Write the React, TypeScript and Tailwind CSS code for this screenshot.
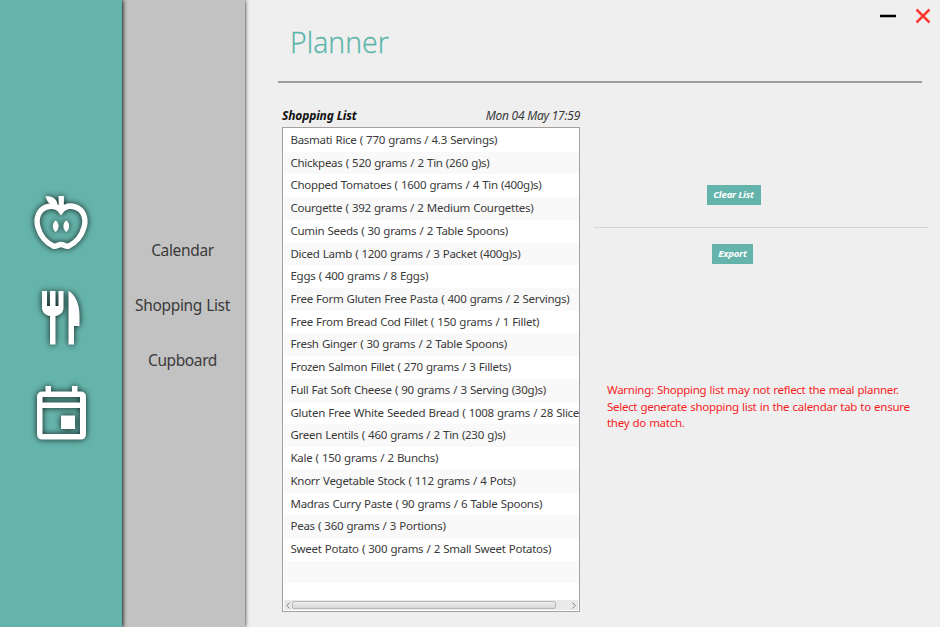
const items = [
  'Basmati Rice ( 770 grams / 4.3 Servings)',
  'Chickpeas ( 520 grams / 2 Tin (260 g)s)',
  'Chopped Tomatoes ( 1600 grams / 4 Tin (400g)s)',
  'Courgette ( 392 grams / 2 Medium Courgettes)',
  'Cumin Seeds ( 30 grams / 2 Table Spoons)',
  'Diced Lamb ( 1200 grams / 3 Packet (400g)s)',
  'Eggs ( 400 grams / 8 Eggs)',
  'Free Form Gluten Free Pasta ( 400 grams / 2 Servings)',
  'Free From Bread Cod Fillet ( 150 grams / 1 Fillet)',
  'Fresh Ginger ( 30 grams / 2 Table Spoons)',
  'Frozen Salmon Fillet ( 270 grams / 3 Fillets)',
  'Full Fat Soft Cheese ( 90 grams / 3 Serving (30g)s)',
  'Gluten Free White Seeded Bread ( 1008 grams / 28 Slice',
  'Green Lentils ( 460 grams / 2 Tin (230 g)s)',
  'Kale ( 150 grams / 2 Bunchs)',
  'Knorr Vegetable Stock ( 112 grams / 4 Pots)',
  'Madras Curry Paste ( 90 grams / 6 Table Spoons)',
  'Peas ( 360 grams / 3 Portions)',
  'Sweet Potato ( 300 grams / 2 Small Sweet Potatos)',
  '',
  '',
];

const iconClass =
  'block overflow-visible fill-white [filter:drop-shadow(0_0_3px_rgba(0,0,0,0.85))]';

function AppleIcon() {
  return (
    <svg className={iconClass} width="54" height="56" viewBox="0 0 56 56" preserveAspectRatio="none">
      <path d="M12 1C19 1 24 4 24.500 10L21 10C16 10 13 6 12 1Z" />
      <path d="M25.500 1H31V15H25.500Z" />
      <path
        d="M28 16C24 11 18 10.500 13 12C5 14.500 1.500 23 4 32C6.500 41 13 48 20 51C23 52 25 49.500 28 49.500C31 49.500 33 52 36 51C43 48 49.500 41 52 32C54.500 23 51 14.500 43 12C38 10.500 32 11 28 16Z"
        fill="none"
        stroke="white"
        strokeWidth="5.600"
      />
      <path d="M22.500 25.500C26.500 28 26.500 34 22.500 37C18.500 34 18.500 28 22.500 25.500ZM33.500 25.500C37.500 28 37.500 34 33.500 37C29.500 34 29.500 28 33.500 25.500Z" />
    </svg>
  );
}

function CutleryIcon() {
  return (
    <svg className={iconClass} width="38" height="54" viewBox="0 0 38 54">
      <path d="M0 0H5V15H8V0H13.500V15H16.500V0H21.500V17C21.500 21 18 24.500 13.500 25V53.500H8V25C3.500 24.500 0 21 0 17Z" />
      <path d="M26.500 0C33 3 37.500 13 37.500 24V35H32V53.500H26.500Z" />
    </svg>
  );
}

function CalendarIcon() {
  return (
    <svg className={iconClass} width="49" height="54" viewBox="0 0 49 54">
      <path
        fillRule="evenodd"
        d="M8.500 0H14V5.500H35V0H40.500V5.500H43.500Q49 5.500 49 11V48Q49 53.500 43.500 53.500H5.500Q0 53.500 0 48V11Q0 5.500 5.500 5.500H8.500ZM5.500 11V16.500H43V11ZM5.500 22V48H43V22Z"
      />
      <path d="M24 29.500H38V43H24Z" />
    </svg>
  );
}

export default function App() {
  return (
    <div className="flex h-[627px] w-[940px] overflow-hidden bg-[#efefef] font-['Noto_Sans','Open_Sans',sans-serif] text-[#3a3a3a]">
      <aside className="z-20 flex w-[122px] shrink-0 flex-col items-center bg-[#65b4ab] pt-[195px] shadow-[1px_0_4px_rgba(0,0,0,0.9)]">
        <AppleIcon />
        <div className="mt-[40px]"><CutleryIcon /></div>
        <div className="mt-[41px]"><CalendarIcon /></div>
      </aside>
      <nav className="z-10 flex w-[123px] shrink-0 flex-col items-center bg-[#c2c2c2] pt-[236px] pr-[2px] text-[15.500px] leading-[28px] tracking-[-0.35px] [word-spacing:0.5px] shadow-[0_0_4px_rgba(0,0,0,0.9)]">
        <span>Calendar</span>
        <span className="mt-[27px] whitespace-nowrap">Shopping List</span>
        <span className="mt-[27px] tracking-[-0.4px]">Cupboard</span>
      </nav>
      <main className="w-[695px] pl-[33px]">
        <header className="flex h-[83px] w-[644px] justify-between border-b-2 border-[#a09d9d]">
          <h1 className="pl-[12px] pt-[20px] font-['Open_Sans','Noto_Sans',sans-serif] text-[28.500px] leading-[44px] font-light tracking-[0.05px] text-[#5ab4a9] [-webkit-text-stroke:0.3px_#5ab4a9]">Planner</h1>
          <div className="-mr-[9px] flex gap-[18px] pt-[8px]">
            <svg className="block" width="18" height="16" viewBox="0 0 18 16"><path d="M1 8H17" stroke="black" strokeWidth="2.500" /></svg>
            <svg className="block" width="16" height="16" viewBox="0 0 16 16"><path d="M1.500 1.500L14.500 14.500M14.500 1.500L1.500 14.500" stroke="#fb392f" strokeWidth="2.500" /></svg>
          </div>
        </header>
        <div className="flex">
          <section className="ml-[4px] w-[298px] shrink-0 pt-[21px]">
            <div className="flex h-[23px] items-center justify-between text-[12px] italic leading-[20px]">
              <strong className="tracking-[-0.15px] text-[#111]">Shopping List</strong>
              <span className="tracking-[-0.26px]">Mon 04 May 17:59</span>
            </div>
            <div className="flex h-[485px] w-[298px] flex-col border border-[#a5a0a0] bg-white p-px">
              <ul className="-mr-px min-h-0 flex-1 overflow-hidden">
                {items.map((item, i) => (
                  <li key={i} className="h-[22.720px] pl-[6.500px] text-[11.500px] leading-[22px] tracking-[-0.28px] [word-spacing:0.5px] whitespace-nowrap even:bg-[#f9f9f9]">
                    {item}
                  </li>
                ))}
              </ul>
              <div className="flex h-[10px] shrink-0 items-center justify-between bg-[#e9e9e9] px-[2px]">
                <svg width="4" height="7" viewBox="0 0 4 7"><path d="M3.500 .5L.8 3.500L3.500 6.500" fill="none" stroke="#888" /></svg>
                <div className="mr-auto ml-[2px] h-[8px] w-[264px] rounded-[2px] border border-[#b8b8b8] bg-linear-to-b from-[#eeeeee] to-[#d7d7d7]" />
                <svg width="4" height="7" viewBox="0 0 4 7"><path d="M.5 .5L3.200 3.500L.5 6.500" fill="none" stroke="#888" /></svg>
              </div>
            </div>
          </section>
          <section className="ml-[14px] w-[334px] shrink-0 pt-[102px]">
            <div className="flex h-[43px] justify-center border-b border-[#d5d5d5] pr-[55px]">
              <button className="h-[20px] w-[54px] bg-[#65b4ab] text-[9.500px] leading-[20px] font-bold italic tracking-[-0.15px] whitespace-nowrap text-white">Clear List</button>
            </div>
            <div className="flex justify-center pt-[16px] pr-[57px]">
              <button className="h-[20px] w-[41px] bg-[#65b4ab] text-[9.500px] leading-[20px] font-bold italic tracking-[-0.15px] text-white">Export</button>
            </div>
            <p className="mt-[118px] ml-[13px] text-[11.500px] leading-[16.500px] tracking-[-0.28px] [word-spacing:0.5px] whitespace-nowrap text-[#f81d1d]">
              Warning: Shopping list may not reflect the meal planner.<br />
              Select generate shopping list in the calendar tab to ensure<br />
              they do match.
            </p>
          </section>
        </div>
      </main>
    </div>
  );
}
